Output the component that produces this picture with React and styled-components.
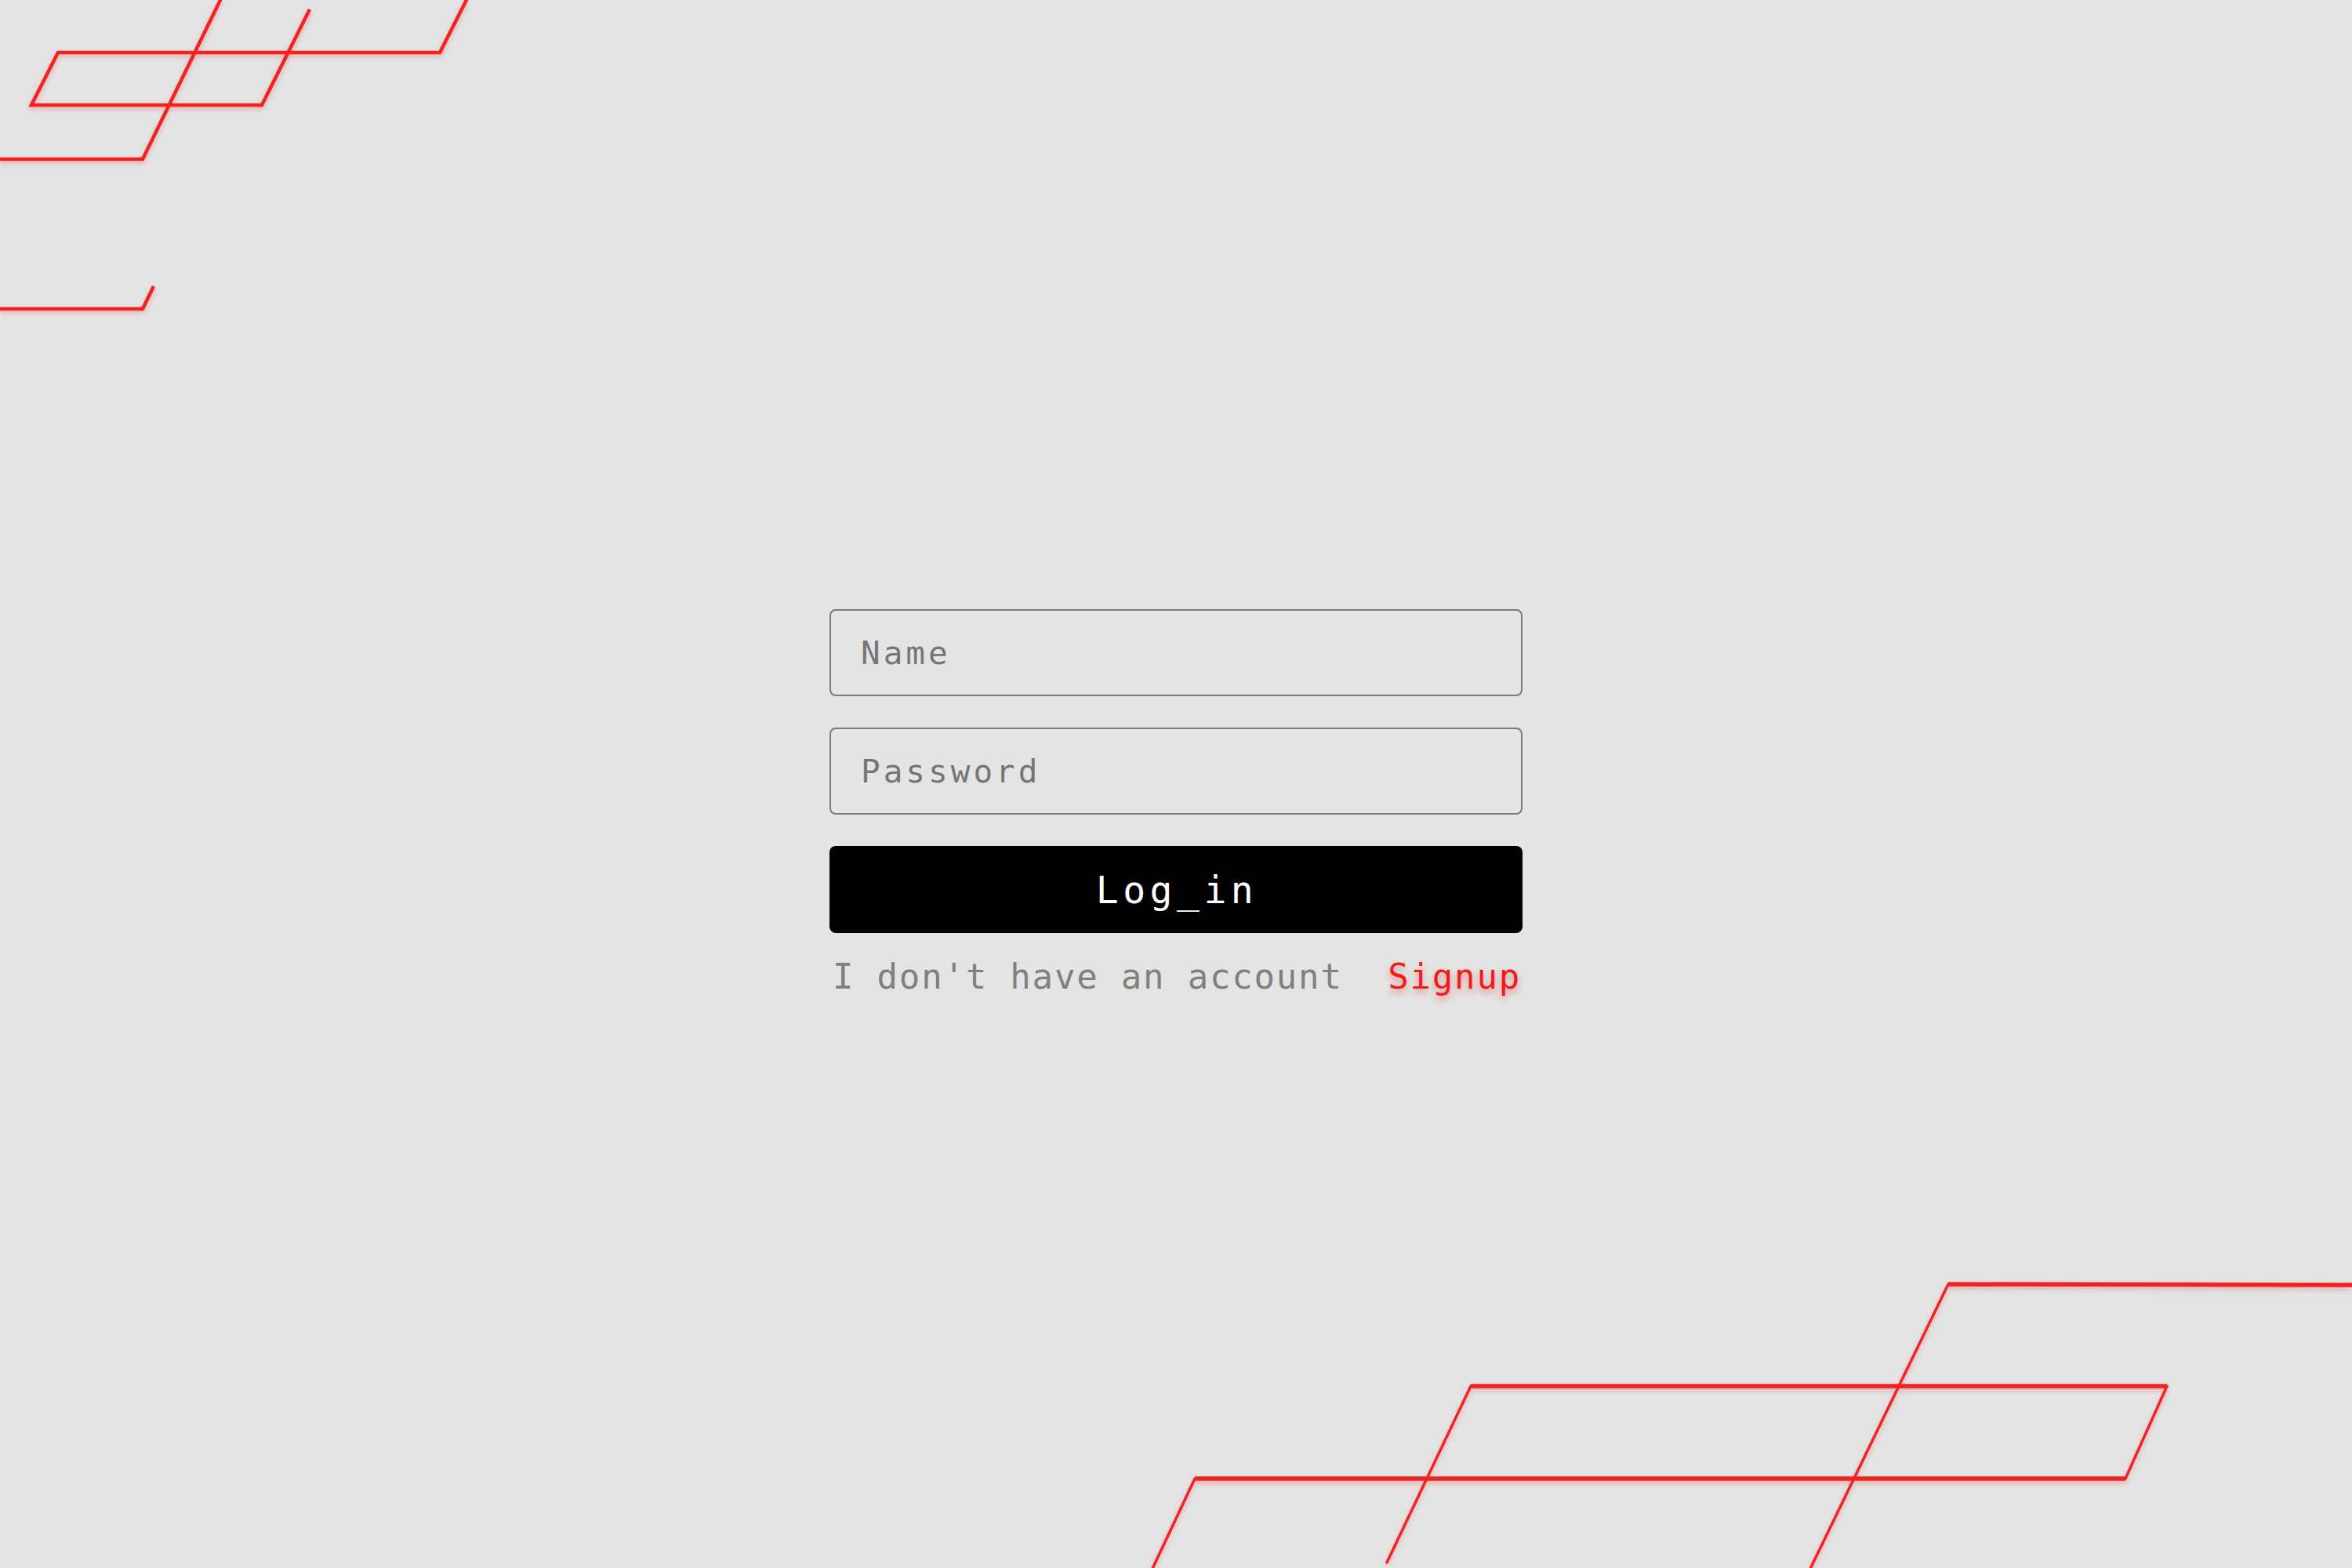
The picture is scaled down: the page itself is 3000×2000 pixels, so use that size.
import styled, { createGlobalStyle } from "styled-components";

const GlobalStyle = createGlobalStyle`
    * {
        box-sizing: border-box;
    }
    html, body {
        margin: 0;
        padding: 0;
        background: #e4e4e4;
    }
`;

function TopDecoration() {
    return (
        <TopLines width="620" height="420" viewBox="0 0 620 420">
            <polyline points="282,-2 182,203 -5,203" />
            <polyline points="596,-2 561,67 74,67 40,134 334,134 395,12" />
            <polyline points="-5,394 182,394 196,365" />
        </TopLines>
    );
}

function BottomDecoration() {
    // coordinates are relative to the bottom-right box (left 1400, top 1600)
    return (
        <BottomLines width="1600" height="400" viewBox="0 0 1600 400">
            <g className="flat">
                <line x1="1085" y1="38" x2="1605" y2="39" />
                <line x1="476" y1="168" x2="1364" y2="168" />
                <line x1="124" y1="286" x2="1311" y2="286" />
            </g>
            <g className="slant">
                <line x1="1085" y1="38" x2="907" y2="405" />
                <line x1="1364" y1="168" x2="1311" y2="286" />
                <line x1="476" y1="168" x2="369" y2="393" />
                <line x1="124" y1="286" x2="68" y2="405" />
            </g>
        </BottomLines>
    );
}

function App() {
    return (
        <Page>
            <GlobalStyle />
            <TopDecoration />
            <BottomDecoration />
            <LoginForm>
                <LoginInput type="text" placeholder="Name" />
                <LoginInput type="password" placeholder="Password" />
                <LoginButton type="submit">Log_in</LoginButton>
                <FooterRow>
                    <span>I don't have an account</span>
                    <SignupLink href="#signup">Signup</SignupLink>
                </FooterRow>
            </LoginForm>
        </Page>
    );
}

export default App;

const Page = styled.div`
    position: relative;
    width: 100%;
    height: 100vh;
    overflow: hidden;
    background: #e4e4e4;
    display: flex;
    flex-direction: column;
    align-items: center;
    padding-top: 777px;
    font-family: "DejaVu Sans Mono", "Liberation Mono", monospace;
`;

const TopLines = styled.svg`
    position: absolute;
    top: 0;
    left: 0;
    fill: none;
    stroke: #f02222;
    stroke-width: 4.5;
    stroke-linejoin: miter;
    filter: drop-shadow(0 3px 3px rgba(240, 30, 30, 0.3));
`;

const BottomLines = styled.svg`
    position: absolute;
    top: 1600px;
    left: 1400px;
    fill: none;
    stroke: #f02222;
    filter: drop-shadow(0 3px 3px rgba(240, 30, 30, 0.3));
    .flat line {
        stroke-width: 5.5;
    }
    .slant line {
        stroke-width: 3.5;
        stroke-linecap: round;
    }
`;

const LoginForm = styled.form`
    position: relative;
    width: 884px;
    display: flex;
    flex-direction: column;
    gap: 40px;
`;

const LoginInput = styled.input`
    width: 100%;
    height: 111px;
    background: transparent;
    border: 2px solid #7b7b7b;
    border-radius: 8px;
    padding-left: 38px;
    font-family: inherit;
    font-size: 41px;
    letter-spacing: 4px;
    color: #333333;
    outline: none;
    ::placeholder {
        color: #8a8a8a;
    }
`;

const LoginButton = styled.button`
    width: 100%;
    height: 111px;
    background: #000000;
    border: none;
    border-radius: 8px;
    color: #ffffff;
    font-family: inherit;
    font-size: 48px;
    letter-spacing: 5.5px;
    padding-left: 8px;
`;

const FooterRow = styled.div`
    display: flex;
    justify-content: space-between;
    align-items: baseline;
    margin-top: -10px;
    padding: 0 2px 0 4px;
    font-size: 44px;
    letter-spacing: 1.8px;
    color: #808080;
`;

const SignupLink = styled.a`
    color: #f01c1c;
    text-decoration: none;
    text-shadow: 0 5px 8px rgba(240, 30, 30, 0.45);
`;
